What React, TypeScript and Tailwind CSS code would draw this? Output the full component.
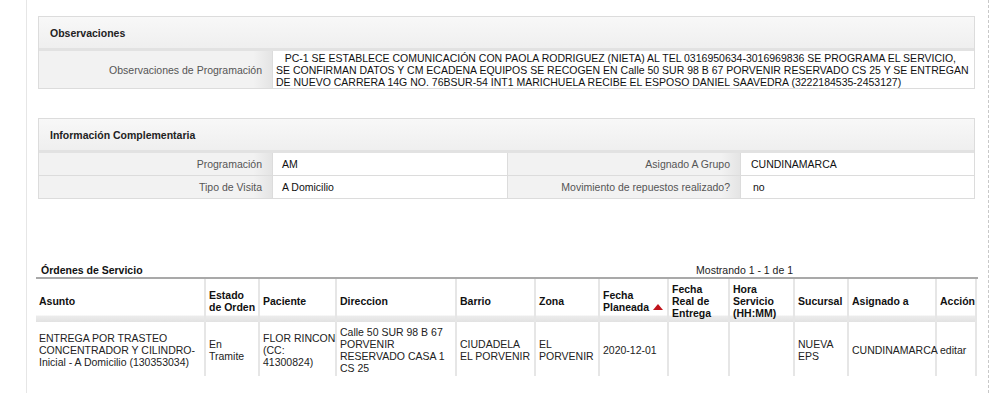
import React from 'react';

const labelBg = 'bg-[linear-gradient(to_right,#f2f2f2_92%,#e4e4e4)]';

const PanelHeader: React.FC<{ title: string }> = ({ title }) => (
  <div className="flex h-[34px] items-center border-b-[3px] border-[#e2e2e2] bg-[linear-gradient(to_bottom,#f8f8f8,#efefef)] pl-[11px] font-bold text-[#222]">
    {title}
  </div>
);

const columns: { label: string[]; w: number; sort?: boolean }[] = [
  { label: ['Asunto'], w: 169 },
  { label: ['Estado', 'de Orden'], w: 54 },
  { label: ['Paciente'], w: 77 },
  { label: ['Direccion'], w: 120 },
  { label: ['Barrio'], w: 79 },
  { label: ['Zona'], w: 64 },
  { label: ['Fecha', 'Planeada'], w: 69, sort: true },
  { label: ['Fecha', 'Real de', 'Entrega'], w: 61 },
  { label: ['Hora', 'Servicio', '(HH:MM)'], w: 65 },
  { label: ['Sucursal'], w: 54 },
  { label: ['Asignado a'], w: 88 },
  { label: ['Acción'], w: 40 },
];

const row: string[][] = [
  ['ENTREGA POR TRASTEO', 'CONCENTRADOR Y CILINDRO-', 'Inicial - A Domicilio (130353034)'],
  ['En', 'Tramite'],
  ['FLOR RINCON', '(CC:', '41300824)'],
  ['Calle 50 SUR 98 B 67', 'PORVENIR', 'RESERVADO CASA 1', 'CS 25'],
  ['CIUDADELA', 'EL PORVENIR'],
  ['EL', 'PORVENIR'],
  ['2020-12-01'],
  [],
  [],
  ['NUEVA', 'EPS'],
  ['CUNDINAMARCA'],
  ['editar'],
];

const obsLines = [
  '   PC-1 SE ESTABLECE COMUNICACIÓN CON PAOLA RODRIGUEZ (NIETA) AL TEL 0316950634-3016969836 SE PROGRAMA EL SERVICIO,',
  'SE CONFIRMAN DATOS Y CM ECADENA EQUIPOS SE RECOGEN EN Calle 50 SUR 98 B 67 PORVENIR RESERVADO CS 25 Y SE ENTREGAN',
  'DE NUEVO CARRERA 14G NO. 76BSUR-54 INT1 MARICHUELA RECIBE EL ESPOSO DANIEL SAAVEDRA (3222184535-2453127)',
];

export default function App() {
  return (
    <div className="flex h-[393px] w-[1007px] overflow-hidden bg-white font-['Liberation_Sans',Arial,sans-serif] text-[10.5px] leading-[12px] text-[#222]">
      <div className="w-[26px] shrink-0" />
      <div className="w-[962px] shrink-0 border-l border-[#e6e6e6] pt-[16px] pl-[11px]">
        {/* Observaciones */}
        <div className="w-[937px] border border-[#dcdcdc]">
          <PanelHeader title="Observaciones" />
          <div className="flex h-[37px]">
            <div className={`flex w-[234px] items-center justify-end border-r border-[#dcdcdc] pr-[10px] text-[#555] ${labelBg}`}>
              Observaciones de Programación
            </div>
            <div className="flex-1 whitespace-pre pt-[1px] pl-[3px] text-[#111]">
              {obsLines.map((l) => (
                <div key={l}>{l}</div>
              ))}
            </div>
          </div>
        </div>

        {/* Información Complementaria */}
        <div className="mt-[29px] w-[937px] border border-[#dcdcdc]">
          <PanelHeader title="Información Complementaria" />
          <div className="grid grid-cols-[234px_235px_233px_1fr]">
            <div className={`flex h-[23px] items-center justify-end border-r border-b border-[#dcdcdc] pr-[10px] text-[#555] ${labelBg}`}>Programación</div>
            <div className="flex h-[23px] items-center border-r border-b border-[#dcdcdc] pl-[9px] text-[#111]">AM</div>
            <div className={`flex h-[23px] items-center justify-end border-r border-b border-[#dcdcdc] pr-[10px] text-[#555] ${labelBg}`}>Asignado A Grupo</div>
            <div className="flex h-[23px] items-center border-b border-[#dcdcdc] pl-[10px] text-[#111]">CUNDINAMARCA</div>
            <div className={`flex h-[22px] items-center justify-end border-r border-[#dcdcdc] pr-[10px] text-[#555] ${labelBg}`}>Tipo de Visita</div>
            <div className="flex h-[22px] items-center border-r border-[#dcdcdc] pl-[9px] text-[#111]">A Domicilio</div>
            <div className={`flex h-[22px] items-center justify-end border-r border-[#dcdcdc] pr-[10px] text-[#555] ${labelBg}`}>Movimiento de repuestos realizado?</div>
            <div className="flex h-[22px] items-center pl-[12px] text-[#111]">no</div>
          </div>
        </div>

        {/* Órdenes de Servicio */}
        <div className="-ml-[2px] mt-[62px] w-[942px]">
          <div className="flex h-[18px] items-center border-b-2 border-[#a9a9a9] pt-[1px]">
            <div className="w-[420px] pl-[5px] font-bold text-[#111]">Órdenes de Servicio</div>
            <div className="w-[337px] text-right text-[#222]">Mostrando 1 - 1 de 1</div>
          </div>
          <table className="w-[940px] table-fixed border-collapse">
            <colgroup>
              {columns.map((c) => (
                <col key={c.label.join()} style={{ width: c.w }} />
              ))}
            </colgroup>
            <thead>
              <tr>
                {columns.map((c) => (
                  <th
                    key={c.label.join()}
                    className="h-[43px] whitespace-nowrap border-r-2 border-r-[#e6e6e6] bg-[linear-gradient(to_bottom,#ffffff_84%,#ececec_86%,#e2e2e2)] pt-[1px] pr-0 pl-[3px] text-left align-middle font-bold text-[#111]"
                  >
                    {c.label.map((l, i) => (
                      <div key={l}>
                        {l}
                        {c.sort && i === c.label.length - 1 && (
                          <svg className="ml-[4px] inline-block align-[1px]" width="10" height="6" viewBox="0 0 10 6">
                            <path d="M0 6 L5 0 L10 6 Z" fill="#c0141c" />
                          </svg>
                        )}
                      </div>
                    ))}
                  </th>
                ))}
              </tr>
            </thead>
            <tbody>
              <tr>
                {row.map((v, i) => (
                  <td
                    key={i}
                    className="h-[54px] whitespace-nowrap border-r-2 border-[#e6e6e6] pt-[1px] pr-0 pl-[3px] align-middle text-[#222]"
                  >
                    {v.map((l) => (
                      <div key={l}>{l}</div>
                    ))}
                  </td>
                ))}
              </tr>
            </tbody>
          </table>
        </div>
      </div>
      <div className="h-full w-0 shrink-0 border-l border-dashed border-[#c8c8c8]" />
    </div>
  );
}
